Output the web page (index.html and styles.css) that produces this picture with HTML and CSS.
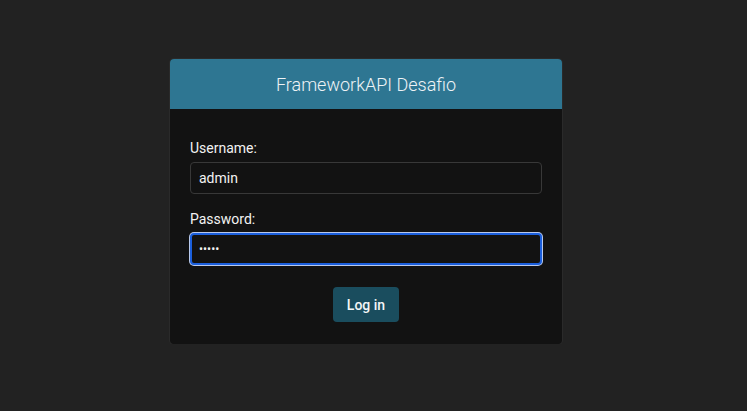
FILE: index.html
```html
<!DOCTYPE html>
<html>
<head>
<meta charset="utf-8">
<link rel="stylesheet" href="styles.css">
</head>
<body>
<div class="page">
  <div class="card">
    <div class="card-header">FrameworkAPI Desafio</div>
    <form class="card-body">
      <label class="label" for="u">Username:</label>
      <input class="input" id="u" type="text" value="admin">
      <label class="label" for="p">Password:</label>
      <input class="input input-focus" id="p" type="password" value="12345">
      <div class="actions">
        <button type="button" class="btn">Log in</button>
      </div>
    </form>
  </div>
</div>
</body>
</html>
```
FILE: styles.css
```css
html, body {
  margin: 0;
  padding: 0;
  background: #222222;
  font-family: Roboto, "Liberation Sans", sans-serif;
}
.page {
  padding-top: 59px;
  padding-left: 170px;
}
.card {
  width: 392px;
  background: #121212;
  border-radius: 4px;
  box-shadow: 0 0 0 1px #2a2a2a;
}
.card-header {
  height: 50px;
  background: #2e7692;
  color: #eef3f6;
  font-size: 18px;
  font-weight: 300;
  display: flex;
  align-items: center;
  justify-content: center;
  border-radius: 4px 4px 0 0;
}
.card-body {
  display: flex;
  flex-direction: column;
  padding: 31px 20px 22px;
  margin: 0;
}
.label {
  color: #f2f2f2;
  font-size: 14px;
  line-height: 17px;
  margin-bottom: 5px;
}
.input {
  box-sizing: border-box;
  height: 32px;
  background: #121212;
  border: 1px solid #383838;
  border-radius: 4px;
  color: #f2f2f2;
  font-family: Roboto, "Liberation Sans", sans-serif;
  font-size: 14px;
  padding: 0 8px;
  margin: 0 0 17px;
  outline: none;
}
.input-focus {
  border: 2px solid #1b5fdc;
  box-shadow: 0 0 0 1px #b8c9ec;
  padding: 0 7px;
  font-size: 12px;
  margin-bottom: 22px;
}
.actions {
  display: flex;
  justify-content: center;
}
.btn {
  width: 66px;
  height: 35px;
  background: #1a4d5e;
  color: #f4f6f7;
  border: none;
  border-radius: 4px;
  font-family: Roboto, "Liberation Sans", sans-serif;
  font-size: 14px;
  font-weight: 500;
  padding: 0;
}
```
